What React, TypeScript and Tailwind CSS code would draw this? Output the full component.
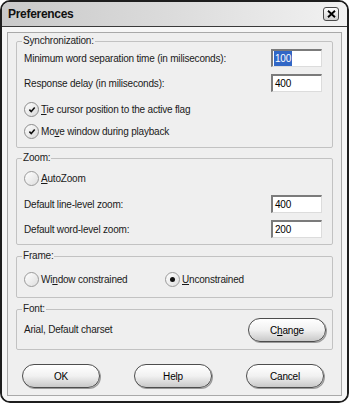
import { ReactNode } from "react";

const font = { fontFamily: '"Liberation Sans Narrow", "Liberation Sans", Arial, sans-serif' };
const titleFont = { fontFamily: '"Liberation Sans", Arial, sans-serif' };

function Check() {
  return (
    <span className="flex h-[15px] w-[15px] shrink-0 items-center justify-center rounded-full border border-[#8c8c8c] bg-gradient-to-br from-white to-[#d9d9d9]">
      <svg width="8" height="7" viewBox="0 0 9 8">
        <path d="M1.5 4.2 L3.6 6.3 L7.6 1.6" fill="none" stroke="#111" strokeWidth="1.8" />
      </svg>
    </span>
  );
}

function Radio({ on }: { on?: boolean }) {
  return (
    <span className="flex h-[15px] w-[15px] shrink-0 items-center justify-center rounded-full border border-[#9a9a9a] bg-gradient-to-br from-white to-[#dedede]">
      {on ? <span className="h-[5px] w-[5px] rounded-full bg-[#111]" /> : null}
    </span>
  );
}

function Field({ value, selected }: { value: string; selected?: boolean }) {
  return (
    <div className="flex h-[18px] w-[51px] items-center border-l-2 border-t-2 border-b border-r border-l-[#7b7b7b] border-t-[#7b7b7b] border-b-[#dcdcdc] border-r-[#dcdcdc] bg-white pl-[1px] text-[10px] text-black">
      <span className={selected ? "bg-[#3167c6] px-[1px] text-white" : "px-[1px]"}>{value}</span>
    </div>
  );
}

function Group({ title, h, children, pr = "pr-[10px]" }: { title: string; h: string; children: ReactNode; pr?: string }) {
  return (
    <fieldset className={`${h} mx-[8px] rounded-[2px] border border-[#c2c2c2] pl-[7px] ${pr}`}>
      <legend className="-ml-[2px] px-[1px] text-[10px] leading-[12px] text-[#222]">{title}</legend>
      {children}
    </fieldset>
  );
}

function Btn({ children }: { children: ReactNode }) {
  return (
    <div className="flex h-[24px] w-[78px] items-center justify-center rounded-full border border-[#4d4d4d] bg-gradient-to-b from-white via-[#f1f1f1] to-[#c9c9c9] text-[10px] text-black shadow-[1px_1px_0_#9a9a9a]">
      {children}
    </div>
  );
}

export default function App() {
  return (
    <div className="h-[404px] w-[350px] bg-white tracking-[-0.2px]" style={font}>
      <div className="flex h-[403px] w-[349px] flex-col overflow-hidden rounded-[10px] border-2 border-[#1e1e1e]">
        {/* title bar */}
        <div className="flex h-[25px] shrink-0 items-center justify-between border-b border-[#3a3a3a] bg-gradient-to-r from-[#c9c9c9] via-[#dcdcdc] to-[#f2f2f2] pl-[6px] pr-[8px]">
          <span className="text-[12px] font-bold tracking-[-0.3px] text-[#111]" style={titleFont}>
            Preferences
          </span>
          <div className="flex h-[14px] w-[16px] items-center justify-center rounded-[3px] border border-[#4a4a4a] bg-gradient-to-b from-white to-[#cfcfcf]">
            <svg width="9" height="8" viewBox="0 0 9 8">
              <path d="M1 0.8 L8 7.2 M8 0.8 L1 7.2" stroke="#000" strokeWidth="1.9" />
            </svg>
          </div>
        </div>

        {/* body */}
        <div className="flex-1 bg-[#f6f6f6] p-[5px]">
          <div className="flex h-full flex-col border border-[#a9a9a9] bg-[#efefef] pt-[2px] text-[10px] text-[#1a1a1a]">
            <Group title="Synchronization:" h="h-[113px]">
              <div className="mt-[2px] flex h-[18px] items-center justify-between">
                <span>Minimum word separation time (in miliseconds):</span>
                <Field value="100" selected />
              </div>
              <div className="mt-[7px] flex h-[18px] items-center justify-between">
                <span>Response delay (in miliseconds):</span>
                <Field value="400" />
              </div>
              <div className="mt-[8px] flex h-[18px] items-center gap-[2px]">
                <Check />
                <span>
                  <u>T</u>ie cursor position to the active flag
                </span>
              </div>
              <div className="mt-[4px] flex h-[18px] items-center gap-[2px]">
                <Check />
                <span>
                  Mo<u>v</u>e window during playback
                </span>
              </div>
            </Group>

            <div className="mt-[4px]">
              <Group title="Zoom:" h="h-[93px]">
                <div className="mt-[5px] flex h-[18px] items-center gap-[2px]">
                  <Radio />
                  <span>
                    <u>A</u>utoZoom
                  </span>
                </div>
                <div className="mt-[8px] flex h-[18px] items-center justify-between">
                  <span>Default line-level zoom:</span>
                  <Field value="400" />
                </div>
                <div className="mt-[7px] flex h-[18px] items-center justify-between">
                  <span>Default word-level zoom:</span>
                  <Field value="200" />
                </div>
              </Group>
            </div>

            <div className="mt-[5px]">
              <Group title="Frame:" h="h-[48px]">
                <div className="mt-[8px] flex h-[18px] items-center">
                  <div className="flex w-[141px] items-center gap-[2px]">
                    <Radio />
                    <span>
                      Wi<u>n</u>dow constrained
                    </span>
                  </div>
                  <div className="flex items-center gap-[2px]">
                    <Radio on />
                    <span>
                      <u>U</u>nconstrained
                    </span>
                  </div>
                </div>
              </Group>
            </div>

            <div className="mt-[5px]">
              <Group title="Font:" h="h-[47px]" pr="pr-[6px]">
                <div className="mt-[3px] flex items-center justify-between">
                  <span>Arial, Default charset</span>
                  <div className="h-[23px]">
                    <Btn>
                      C<u>h</u>ange
                    </Btn>
                  </div>
                </div>
              </Group>
            </div>

            <div className="mt-[14px] flex gap-[34px] pl-[14px]">
              <Btn>OK</Btn>
              <Btn>Help</Btn>
              <Btn>Cancel</Btn>
            </div>
          </div>
        </div>
      </div>
    </div>
  );
}
